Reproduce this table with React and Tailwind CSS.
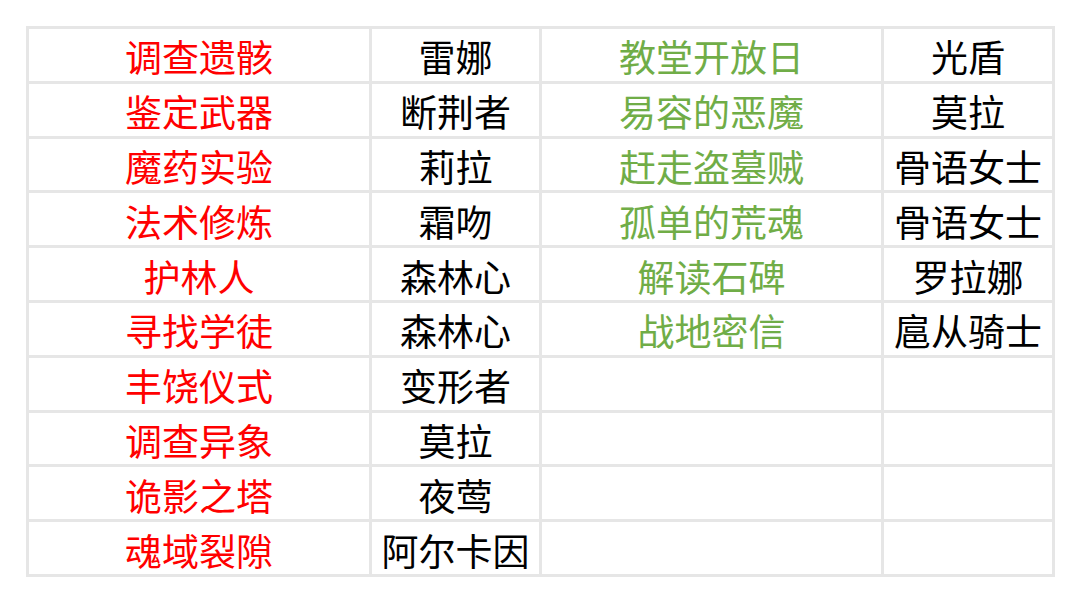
import React from "react";

const rows = [
  ["调查遗骸", "雷娜", "教堂开放日", "光盾"],
  ["鉴定武器", "断荆者", "易容的恶魔", "莫拉"],
  ["魔药实验", "莉拉", "赶走盗墓贼", "骨语女士"],
  ["法术修炼", "霜吻", "孤单的荒魂", "骨语女士"],
  ["护林人", "森林心", "解读石碑", "罗拉娜"],
  ["寻找学徒", "森林心", "战地密信", "扈从骑士"],
  ["丰饶仪式", "变形者", "", ""],
  ["调查异象", "莫拉", "", ""],
  ["诡影之塔", "夜莺", "", ""],
  ["魂域裂隙", "阿尔卡因", "", ""],
];

const cell =
  "border-[3px] border-[#e6e6e6] text-center align-middle p-0 pt-[4px] leading-none";

export default function App() {
  return (
    <div className="w-[1080px] h-[602px] bg-white pt-[26px] pl-[26px]">
      <table
        className="border-collapse table-fixed w-[1026px] text-[37px]"
        style={{ fontFamily: '"Noto Sans CJK SC", "Noto Sans", sans-serif' }}
      >
        <colgroup>
          <col className="w-[343px]" />
          <col className="w-[170px]" />
          <col className="w-[342px]" />
          <col className="w-[171px]" />
        </colgroup>
        <tbody>
          {rows.map((r, i) => (
            <tr key={i} className="h-[54.8px]">
              <td className={`${cell} text-[#ff0000]`}>{r[0]}</td>
              <td className={`${cell} text-black`}>{r[1]}</td>
              <td className={`${cell} text-[#70ad47]`}>{r[2]}</td>
              <td className={`${cell} text-black`}>{r[3]}</td>
            </tr>
          ))}
        </tbody>
      </table>
    </div>
  );
}
